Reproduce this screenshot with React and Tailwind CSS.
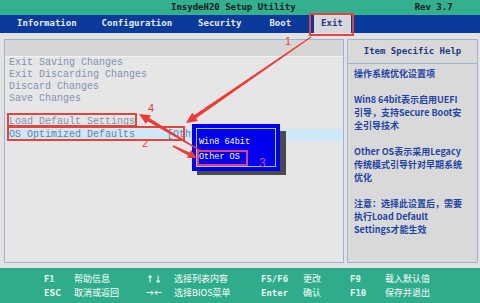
import React from 'react';

const mono = { fontFamily: '"DejaVu Sans Mono", monospace' };

// tapered annotation arrow, thin at the tail and thick at the head
function arrowPoints(x1, y1, x2, y2, tail = 0.5, neck = 1.8, headLen = 11, headW = 5) {
  const dx = x2 - x1;
  const dy = y2 - y1;
  const len = Math.hypot(dx, dy);
  const ux = dx / len;
  const uy = dy / len;
  const nx = -uy;
  const ny = ux;
  const bx = x2 - ux * headLen;
  const by = y2 - uy * headLen;
  const p = [
    [x1 + nx * tail, y1 + ny * tail],
    [bx + nx * neck, by + ny * neck],
    [bx + nx * headW, by + ny * headW],
    [x2, y2],
    [bx - nx * headW, by - ny * headW],
    [bx - nx * neck, by - ny * neck],
    [x1 - nx * tail, y1 - ny * tail],
  ];
  return p.map(q => q.join(',')).join(' ');
}

const menu = ['Information', 'Configuration', 'Security', 'Boot'];
const menuGap = ['ml-[17px]', 'ml-[25px]', 'ml-[26px]', 'ml-[28px]'];

const items = [
  'Exit Saving Changes',
  'Exit Discarding Changes',
  'Discard Changes',
  'Save Changes',
];

const help = [
  ['操作系统优化设置项'],
  ['Win8 64bit表示启用UEFI', '引导，支持Secure Boot安', '全引导技术'],
  ['Other OS表示采用Legacy', '传统模式引导针对早期系统', '优化'],
  ['注意：选择此设置后，需要', '执行Load Default', 'Settings才能生效'],
];

const footer = [
  ['F1', '帮助信息', '↑↓', '选择列表内容', 'F5/F6', '更改', 'F9', '载入默认值'],
  ['ESC', '取消或返回', '→←', '选择BIOS菜单', 'Enter', '确认', 'F10', '保存并退出'],
];

export default function App() {
  const cjk = { fontFamily: '"Noto Sans CJK SC", sans-serif' };

  return (
    <div className="relative w-[480px] h-[303px] overflow-hidden bg-[#e2e2e2]">
      {/* title bar */}
      <div
        className="h-[15px] bg-[#33b08f] flex items-center text-[9px] font-bold text-[#10201a]"
        style={mono}
      >
        <span className="ml-[171px]">InsydeH20 Setup Utility</span>
        <span className="ml-[119px]">Rev 3.7</span>
      </div>

      {/* menu bar */}
      <div
        className="h-[18px] bg-[#0a3a9c] flex items-stretch text-[9px] font-bold text-[#e4eaf6]"
        style={mono}
      >
        {menu.map((m, i) => (
          <span key={m} className={`${menuGap[i]} flex items-center`}>{m}</span>
        ))}
        <span className="ml-[23px] w-[37px] bg-[#d9d9d9] text-[#1a3a8a] flex items-center pl-[7px]">
          Exit
        </span>
      </div>

      {/* main */}
      <div className="h-[235px] flex pt-[6px] pl-[4px] gap-[3px]">
        <div className="w-[340px] h-[224px] border border-[#9fb3d2] bg-[#e6e6e6] flex flex-col">
          <div className="h-[17px] bg-[#d6d6d6] border-b border-[#f2f2f2]" />
          <div
            className="pl-[4px] text-[10px] leading-[12px] text-[#8392b0]"
            style={{ fontFamily: '"Liberation Mono", monospace' }}
          >
            {items.map(t => (
              <div key={t} className="whitespace-pre">{t}</div>
            ))}
            <div className="h-[11px]" />
            <div className="whitespace-pre">Load Default Settings</div>
            <div className="flex bg-[#cde8f9] text-[#6a7ea4] -ml-[4px] pl-[4px] mt-[1px] h-[12px]">
              <span className="w-[158px]">OS Optimized Defaults</span>
              <span className="w-[24px] overflow-hidden whitespace-nowrap">[Oth</span>
            </div>
          </div>
        </div>

        <div className="w-[131px] h-[224px] border border-[#9fb3d2] bg-[#d9d9d9] flex flex-col">
          <div
            className="h-[24px] border-b border-[#9fb3d2] flex items-center justify-center text-[9px] font-bold text-[#1d3a82]"
            style={mono}
          >
            Item Specific Help
          </div>
          <div
            className="pl-[6px] pt-[3px] text-[9px] leading-[13px] font-bold text-[#1f43a6] flex flex-col gap-[13px]"
            style={cjk}
          >
            {help.map((p, i) => (
              <div key={i}>
                {p.map(l => (
                  <div key={l} className="whitespace-nowrap">{l}</div>
                ))}
              </div>
            ))}
          </div>
        </div>
      </div>

      {/* footer */}
      <div className="h-[35px] bg-[#2fac8c] pt-[4px] text-[9px] leading-[14px] text-white" style={cjk}>
        {footer.map((r, i) => (
          <div key={i} className="flex">
            <span className="ml-[44px] w-[30px] font-bold text-[#e8f6f0]">{r[0]}</span>
            <span className="w-[72px]">{r[1]}</span>
            <span className="w-[28px] text-[8px] font-bold">{r[2]}</span>
            <span className="w-[87px]">{r[3]}</span>
            <span className="w-[42px] font-bold text-[#e8f6f0]" style={mono}>{r[4]}</span>
            <span className="w-[47px]">{r[5]}</span>
            <span className="w-[35px] font-bold text-[#e8f6f0]" style={mono}>{r[6]}</span>
            <span>{r[7]}</span>
          </div>
        ))}
      </div>

      {/* popup */}
      <div className="absolute left-[197px] top-[131px] w-[89px] h-[44px] bg-[#4a4a4a]" />
      <div className="absolute left-[192px] top-[124px] w-[88px] h-[47px] bg-[#0000f0] p-[4px]">
        <div
          className="h-full border border-[#a8c0e8] pl-[2px] pt-[6px] text-[8.5px] leading-[15px] text-white"
          style={{ fontFamily: '"Liberation Mono", monospace' }}
        >
          <div>Win8 64bit</div>
          <div>Other OS</div>
        </div>
      </div>

      {/* annotations */}
      <div className="absolute left-[309px] top-[13px] w-[45px] h-[23px] border-2 border-[#e2443f]" />
      <div className="absolute left-[7px] top-[113px] w-[130px] h-[14px] border-2 border-[#e2443f]" />
      <div className="absolute left-[7px] top-[126px] w-[178px] h-[15px] border-2 border-[#e2443f]" />
      <div className="absolute left-[197px] top-[150px] w-[51px] h-[16px] border-2 border-[#e0407c]" />

      <svg className="absolute left-0 top-0 pointer-events-none" width="480" height="303">
        <polygon points={arrowPoints(311, 37, 186, 123)} fill="#ef3b34" />
        <polygon points={arrowPoints(201, 151, 139, 114)} fill="#ef3b34" />
        <polygon points={arrowPoints(173, 146, 197, 158, 0.8, 1.6, 9, 4.5)} fill="#ef3b34" />
      </svg>

      <span className="absolute left-[285px] top-[35px] text-[11px] leading-[12px] text-[#e8443c]" style={{ fontFamily: '"Liberation Sans", sans-serif' }}>1</span>
      <span className="absolute left-[142px] top-[137px] text-[11px] leading-[12px] text-[#e8443c]" style={{ fontFamily: '"Liberation Sans", sans-serif' }}>2</span>
      <span className="absolute left-[259px] top-[157px] text-[12px] leading-[12px] text-[#d0449a]" style={{ fontFamily: '"Liberation Sans", sans-serif' }}>3</span>
      <span className="absolute left-[148px] top-[102px] text-[11px] leading-[12px] text-[#e8443c]" style={{ fontFamily: '"Liberation Sans", sans-serif' }}>4</span>
    </div>
  );
}
